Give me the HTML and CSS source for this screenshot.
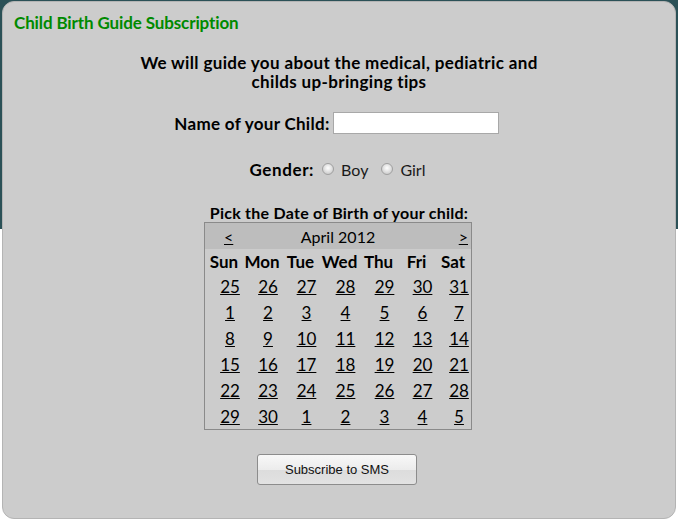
FILE: index.html
```html
<!DOCTYPE html>
<html>
<head>
<meta charset="utf-8">
<link rel="stylesheet" href="styles.css">
</head>
<body>
<div class="panel">
  <h1 class="title">Child Birth Guide Subscription</h1>
  <div class="content">
    <p class="intro">We will guide you about the medical, pediatric and<br>childs up-bringing tips</p>
    <div class="row name-row">
      <label class="lbl">Name of your Child:</label>
      <input class="txt" type="text">
    </div>
    <div class="row gender-row">
      <span class="lbl">Gender:</span>
      <input class="radio" type="radio" name="g"><span class="opt">Boy</span>
      <input class="radio" type="radio" name="g"><span class="opt">Girl</span>
    </div>
    <div class="lbl pick">Pick the Date of Birth of your child:</div>
    <div class="cal">
      <div class="cal-title"><a class="nav prev">&lt;</a><span class="month">April 2012</span><a class="nav next">&gt;</a></div>
      <div class="cal-grid">
        <span class="dh">Sun</span><span class="dh">Mon</span><span class="dh">Tue</span><span class="dh">Wed</span><span class="dh">Thu</span><span class="dh">Fri</span><span class="dh">Sat</span>
        <a class="d">25</a><a class="d">26</a><a class="d">27</a><a class="d">28</a><a class="d">29</a><a class="d">30</a><a class="d">31</a>
        <a class="d">1</a><a class="d">2</a><a class="d">3</a><a class="d">4</a><a class="d">5</a><a class="d">6</a><a class="d">7</a>
        <a class="d">8</a><a class="d">9</a><a class="d">10</a><a class="d">11</a><a class="d">12</a><a class="d">13</a><a class="d">14</a>
        <a class="d">15</a><a class="d">16</a><a class="d">17</a><a class="d">18</a><a class="d">19</a><a class="d">20</a><a class="d">21</a>
        <a class="d">22</a><a class="d">23</a><a class="d">24</a><a class="d">25</a><a class="d">26</a><a class="d">27</a><a class="d">28</a>
        <a class="d">29</a><a class="d">30</a><a class="d">1</a><a class="d">2</a><a class="d">3</a><a class="d">4</a><a class="d">5</a>
      </div>
    </div>
    <button class="btn">Subscribe to SMS</button>
  </div>
</div>
</body>
</html>
```
FILE: styles.css
```css
html, body {
  margin: 0;
  padding: 0;
}
body {
  width: 678px;
  height: 523px;
  background: linear-gradient(to bottom, #2b5157 0, #2b5157 229px, #ffffff 229px);
  font-family: Lato, "DejaVu Sans", sans-serif;
  color: #000;
  padding-top: 1px;
  box-sizing: border-box;
  overflow: hidden;
}
.panel {
  margin: 0 2px;
  height: 518px;
  box-sizing: border-box;
  background: #cccccc;
  border: 1px solid #b4b4b4;
  border-radius: 12px;
}
.title {
  margin: 0;
  padding: 11px 0 0 11px;
  font-size: 17px;
  font-weight: bold;
  letter-spacing: -0.12px;
  color: #008a00;
  line-height: 20px;
}
.content {
  display: flex;
  flex-direction: column;
  align-items: center;
}
.intro {
  margin: 20px 0 0 0;
  text-align: center;
  font-weight: bold;
  font-size: 17px;
  letter-spacing: 0.35px;
  line-height: 19px;
}
.row {
  display: flex;
  align-items: center;
}
.lbl {
  font-weight: bold;
  font-size: 17px;
  letter-spacing: 0.3px;
}
.name-row {
  margin-top: 21px;
  margin-right: 5px;
  height: 22px;
}
.txt {
  margin: 0 0 0 3px;
  width: 166px;
  height: 22px;
  box-sizing: border-box;
  border: 1px solid #a8a8a8;
  background: #fff;
  padding: 0 3px;
}
.gender-row {
  margin-top: 25px;
  margin-right: 3px;
  height: 20px;
}
.gender-row .lbl {
  letter-spacing: 0.6px;
}
.radio {
  appearance: none;
  -webkit-appearance: none;
  width: 12px;
  height: 12px;
  margin: 0 7px 0 8px;
  border-radius: 50%;
  border: 1px solid #a0a0a0;
  background: radial-gradient(circle at 50% 40%, #ffffff 0, #e6e6e6 40%, #bdbdbd 100%);
  box-sizing: border-box;
}
.radio + .opt + .radio {
  margin-left: 13px;
}
.opt {
  font-size: 16px;
  color: #1a1a1a;
}
.pick {
  margin-top: 25px;
  line-height: 18px;
  font-size: 16px;
  letter-spacing: 0.25px;
}
.cal {
  width: 268px;
  border: 1px solid #8a8a8a;
  box-sizing: border-box;
  margin-right: 2px;
}
.cal-title {
  height: 26px;
  background: #bdbdbd;
  display: grid;
  grid-template-columns: 1fr auto 1fr;
  align-items: center;
  font-size: 16px;
}
.prev {
  padding-left: 19px;
}
.next {
  justify-self: end;
  padding-right: 3px;
}
.nav {
  text-decoration: underline;
  color: #000;
}
.cal-grid {
  display: grid;
  grid-template-columns: 38px 38px 39px 39px 39px 37px 36px;
  grid-template-rows: 24px;
  grid-auto-rows: 26px;
  align-items: center;
}
.dh {
  text-align: center;
  font-weight: bold;
  font-size: 17px;
}
.d {
  text-align: center;
  padding-left: 12px;
  font-size: 17px;
  color: #000;
  text-decoration: underline;
}
.btn {
  margin-top: 24px;
  margin-right: 4px;
  width: 160px;
  height: 31px;
  border: 1px solid #8c8c8c;
  border-radius: 3px;
  background: linear-gradient(to bottom, #f8f8f8 0, #ececec 50%, #dcdcdc 51%, #e2e2e2 100%);
  font-family: "Liberation Sans", Arial, sans-serif;
  font-size: 13px;
  color: #111;
}
```
